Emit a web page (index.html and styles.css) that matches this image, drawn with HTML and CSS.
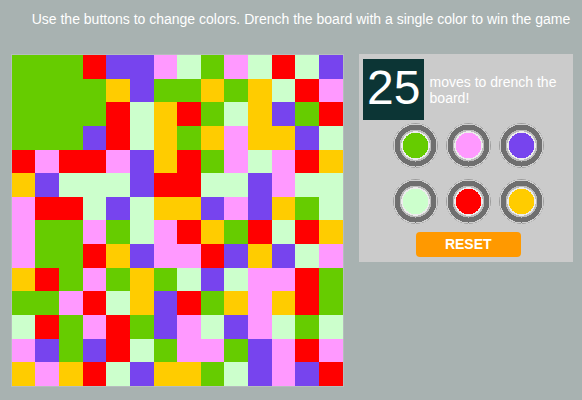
FILE: index.html
```html
<!DOCTYPE html>
<html lang="en">

<head>
    <meta charset="UTF-8">
    <meta name="viewport" content="width=device-width, initial-scale=1.0">
    <title>Drench</title>
    <link rel="stylesheet" href="styles.css">
</head>

<body>

    <p class="intro">Use the buttons to change colors. Drench the board with a single color to win the game</p>

    <div class="game">
        <!-- Tablero 14x14, se llena desde el script -->
        <div class="board" id="board"></div>

        <div class="panel">
            <div class="info">
                <div class="moves" id="moves">25</div>
                <p class="info-text">moves to drench the board!</p>
            </div>

            <!-- Botones de colores -->
            <div class="colors">
                <button class="color-btn green" data-color="G"></button>
                <button class="color-btn pink" data-color="K"></button>
                <button class="color-btn purple" data-color="P"></button>
                <button class="color-btn light" data-color="L"></button>
                <button class="color-btn red" data-color="R"></button>
                <button class="color-btn yellow" data-color="Y"></button>
            </div>

            <button class="reset-btn" id="resetBtn">RESET</button>
        </div>
    </div>

    <script>
        // Tablero inicial, una letra por celda
        const start = [
            'GGGRPPKLGKLRLP',
            'GGGGYPGGYGYLRK',
            'GGGGRLYRGLYPGR',
            'GGGPRLYGYKYYPL',
            'RKRRKPYRGKLKRY',
            'YPLLLPRRLLPKLL',
            'KRRLPLYYPKPYGL',
            'KGGKGLKRYGRLRY',
            'KGGRYPKKRPYPLK',
            'YRGKGYGLPLKKRG',
            'GGKRLYPRGYKYRG',
            'LRGKRGPKLPKLGL',
            'KPGPRLGKKGPKRK',
            'YKYRLPYYGLPKPR'
        ];
        const names = { G: 'green', K: 'pink', P: 'purple', L: 'light', R: 'red', Y: 'yellow' };
        const size = 14;

        const boardEl = document.getElementById('board');
        const movesEl = document.getElementById('moves');
        let grid = [];
        let moves = 25;

        function draw() {
            boardEl.innerHTML = '';
            grid.forEach(row => {
                row.forEach(c => {
                    const cell = document.createElement('div');
                    cell.className = 'cell ' + names[c];
                    boardEl.appendChild(cell);
                });
            });
            movesEl.textContent = moves;
        }

        function reset() {
            grid = start.map(r => r.split(''));
            moves = 25;
            draw();
        }

        // Rellenar desde la esquina superior izquierda
        function flood(color) {
            const old = grid[0][0];
            if (old === color || moves === 0) return;
            const stack = [[0, 0]];
            while (stack.length) {
                const [y, x] = stack.pop();
                if (y < 0 || x < 0 || y >= size || x >= size || grid[y][x] !== old) continue;
                grid[y][x] = color;
                stack.push([y + 1, x], [y - 1, x], [y, x + 1], [y, x - 1]);
            }
            moves--;
            draw();
        }

        document.querySelectorAll('.color-btn').forEach(btn => {
            btn.addEventListener('click', () => flood(btn.dataset.color));
        });
        document.getElementById('resetBtn').addEventListener('click', reset);

        reset();
    </script>

</body>

</html>
```

FILE: styles.css
```css
/* Reset */
* {
    margin: 0;
    padding: 0;
    box-sizing: border-box;
}

body {
    background-color: #a8b2b1;
    font-family: "Liberation Sans", Arial, sans-serif;
    color: white;
}

.intro {
    font-size: 14px;
    line-height: 16px;
    padding: 10.5px 0 0 31.7px;
}

.game {
    display: flex;
    align-items: flex-start;
    gap: 15.6px;
    padding: 27.5px 0 0 10.7px;
}

/* Tablero */
.board {
    width: 333px;
    height: 333px;
    border: 1px solid #b6bdbd;
    display: grid;
    grid-template-columns: repeat(14, 1fr);
    grid-template-rows: repeat(14, 1fr);
}

.green { --c: #66cc00; }
.pink { --c: #ff99ff; }
.purple { --c: #7744ee; }
.light { --c: #ccffcc; }
.red { --c: #ff0000; }
.yellow { --c: #ffcc00; }

.cell {
    background-color: var(--c);
}

/* Panel derecho */
.panel {
    width: 213.4px;
    height: 208px;
    background-color: #cbcbcb;
    padding: 5px 4px 0;
    display: flex;
    flex-direction: column;
    align-items: center;
}

.info {
    align-self: stretch;
    display: flex;
    align-items: center;
    gap: 5.3px;
}

.moves {
    width: 61px;
    height: 61px;
    background-color: #0c3535;
    font-size: 48px;
    line-height: 57px;
    text-align: center;
    flex-shrink: 0;
}

.info-text {
    font-size: 14px;
    line-height: 16px;
}

.colors {
    display: grid;
    grid-template-columns: repeat(3, 45px);
    column-gap: 8px;
    row-gap: 11.7px;
    margin: 2.5px 0 0 5.4px;
}

.color-btn {
    width: 45px;
    height: 45px;
    border: none;
    border-radius: 50%;
    cursor: pointer;
    background: radial-gradient(circle,
            var(--c) 0 12.8px,
            #ececec 12.8px 14.3px,
            #bcbcbc 14.3px 16px,
            #6f6f6f 16px 21px,
            #cfcfcf 21px 22px,
            #9c9c9c 22px 22.5px,
            transparent 22.5px);
}

.reset-btn {
    margin: 7.5px 0 0 4.6px;
    width: 105px;
    height: 25.6px;
    background-color: #ff9900;
    color: white;
    border: none;
    border-radius: 4px;
    font-family: inherit;
    font-size: 14px;
    font-weight: bold;
    cursor: pointer;
}
```
